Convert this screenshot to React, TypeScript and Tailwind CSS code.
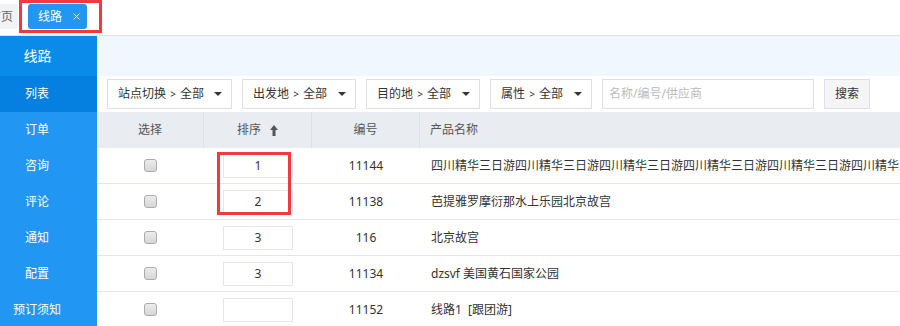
import React from 'react';

const menuItems = ['订单', '咨询', '评论', '通知', '配置', '预订须知'];

const filters = [
  { label: '站点切换', width: 'w-[125px]' },
  { label: '出发地', width: 'w-[114px]' },
  { label: '目的地', width: 'w-[114px]' },
  { label: '属性', width: 'w-[102px]' },
];

const rows = [
  { sort: '1', id: '11144', name: '四川精华三日游'.repeat(8) },
  { sort: '2', id: '11138', name: '芭提雅罗摩衍那水上乐园北京故宫' },
  { sort: '3', id: '116', name: '北京故宫' },
  { sort: '3', id: '11134', name: 'dzsvf 美国黄石国家公园' },
  { sort: '', id: '11152', name: '线路1  [跟团游]' },
];

const Caret = () => (
  <svg width="8" height="4" viewBox="0 0 8 4" className="shrink-0">
    <polygon points="0,0 8,0 4,4" fill="#333" />
  </svg>
);

const SortUp = () => (
  <svg width="8" height="11" viewBox="0 0 8 11" className="ml-[9px]">
    <polygon points="4,0 8,5 0,5" fill="#555" />
    <rect x="2.5" y="5" width="3" height="6" fill="#555" />
  </svg>
);

export default function App() {
  return (
    <div className="relative w-[900px] h-[326px] overflow-hidden bg-white font-['Noto_Sans','Noto_Sans_CJK_SC',sans-serif]">
      {/* Tabs */}
      <div className="h-[36px] border-b border-[#dfe4ea] flex items-start pt-[4px] overflow-hidden">
        <div className="ml-[-16px] h-[25px] px-[5px] flex items-center bg-[#f0f2f5] text-[12px] text-[#666] rounded-[3px]">
          首页
        </div>
        <div className="ml-[10px] h-[25px] pl-[10px] pr-[7px] flex items-center bg-[#2196f3] text-white text-[12px] rounded-[3px]">
          <span>线路</span>
          <svg width="7" height="7" viewBox="0 0 7 7" className="ml-[11px]">
            <path d="M0.5 0.5 L6.5 6.5 M6.5 0.5 L0.5 6.5" stroke="#d4eafd" strokeWidth="1" />
          </svg>
        </div>
      </div>

      <div className="flex h-[290px] overflow-hidden">
        {/* Sidebar */}
        <div className="w-[97px] shrink-0 bg-[#2196f3] text-white flex flex-col">
          <div className="h-[40px] shrink-0 bg-[#0b8be9] flex items-center">
            <span className="w-[75px] text-center text-[14px] leading-none">线路</span>
          </div>
          <div className="h-[36px] shrink-0 bg-[#0580e0] flex items-center">
            <span className="w-[74px] text-center text-[12px] leading-none">列表</span>
          </div>
          {menuItems.map((m) => (
            <div key={m} className="h-[36px] shrink-0 flex items-center">
              <span className="w-[74px] text-center text-[12px] leading-none">{m}</span>
            </div>
          ))}
        </div>

        {/* Main */}
        <div className="flex-1 min-w-0 flex flex-col">
          <div className="h-[40px] shrink-0 bg-[#f0f7fe]" />

          <div className="h-[36px] shrink-0 flex items-center gap-[10px] px-[10px] text-[12px] text-[#333]">
            {filters.map((f) => (
              <div
                key={f.label}
                className={`${f.width} h-[30px] border border-[#dcdfe6] pl-[10px] pr-[9px] flex items-center justify-between`}
              >
                <span className="whitespace-nowrap">
                  {f.label} <span className="text-[10px] mx-[1px]">&gt;</span> 全部
                </span>
                <Caret />
              </div>
            ))}
            <div className="w-[212px] h-[30px] border border-[#dcdfe6] px-[6px] flex items-center text-[#bbb]">
              名称/编号/供应商
            </div>
            <div className="w-[46px] h-[30px] border border-[#dcdfe6] bg-[#f5f5f5] flex items-center justify-center">
              搜索
            </div>
          </div>

          {/* Table */}
          <div className="flex flex-col text-[12px] text-[#333]">
            <div className="h-[36px] shrink-0 bg-[#e9ecf1] flex text-[#555]">
              <div className="w-[107px] border-r border-[#dde1e6] flex items-center justify-center">选择</div>
              <div className="w-[108px] border-r border-[#dde1e6] flex items-center justify-center">
                排序
                <SortUp />
              </div>
              <div className="w-[108px] border-r border-[#dde1e6] flex items-center justify-center">编号</div>
              <div className="flex-1 flex items-center pl-[10px]">产品名称</div>
            </div>
            {rows.map((r, i) => (
              <div key={i} className="h-[36px] shrink-0 border-b border-[#e3e7ec] flex items-center">
                <div className="w-[107px] flex justify-center">
                  <div className="w-[13px] h-[13px] rounded-[3px] border border-[#ababab] bg-gradient-to-b from-[#ececec] to-[#d6d6d6]" />
                </div>
                <div className="w-[108px] flex justify-center">
                  <div className="w-[70px] h-[24px] border border-[#e6e6e6] flex items-center justify-center">
                    {r.sort}
                  </div>
                </div>
                <div className="w-[108px] text-center">{r.id}</div>
                <div className="flex-1 min-w-0 pl-[11px] whitespace-pre overflow-hidden">{r.name}</div>
              </div>
            ))}
          </div>
        </div>
      </div>

      {/* annotation boxes */}
      <div className="absolute left-[19px] top-0 w-[83px] h-[33px] border-[3px] border-[#f23a3a]" />
      <div className="absolute left-[217px] top-[152px] w-[74px] h-[63px] border-[3px] border-[#f23a3a]" />
    </div>
  );
}
